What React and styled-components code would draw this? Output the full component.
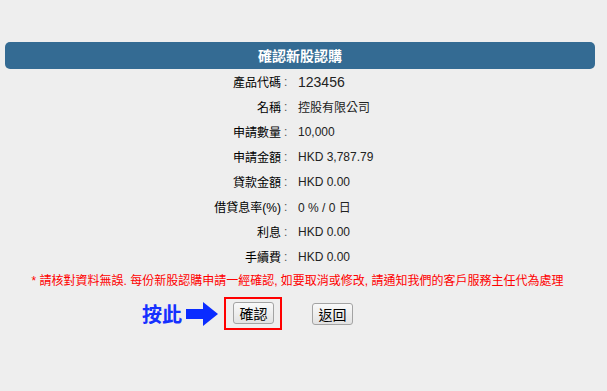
import React from "react";
import styled, { createGlobalStyle } from "styled-components";

const Global = createGlobalStyle`
  html, body { margin: 0; padding: 0; background: #eeeeee; }
  body {
    font-family: "Liberation Sans", Arial, "Noto Sans CJK TC", sans-serif;
    font-size: 12px;
    color: #000;
  }
`;

const Page = styled.div`
  width: 590px;
  padding: 42px 12px 0 5px;
`;

const TitleBar = styled.div`
  height: 27px;
  line-height: 27px;
  background: #346b93;
  border-radius: 5px;
  color: #fff;
  font-weight: bold;
  font-size: 14px;
  text-align: center;
  font-family: "Noto Sans CJK TC", sans-serif;
`;

const InfoGrid = styled.div`
  display: grid;
  grid-template-columns: 276px 17px 1fr;
  grid-auto-rows: 25px;
  align-items: center;
`;

const Label = styled.div`
  text-align: right;
  font-size: 12px;
  color: #000;
`;

const Colon = styled.div`
  padding-left: 3px;
  color: #555;
  font-size: 12px;
`;

const Value = styled.div`
  font-size: ${(p) => (p.$large ? "14px" : "12px")};
  color: #222;
`;

const Note = styled.div`
  height: 25px;
  line-height: 25px;
  text-align: center;
  color: #ff0000;
  font-size: 12px;
  padding-right: 5px;
`;

const ActionRow = styled.div`
  display: flex;
  align-items: center;
  margin-top: 3px;
  padding-left: 137px;
`;

const Hint = styled.span`
  font-family: "Noto Sans CJK TC", sans-serif;
  font-size: 20px;
  font-weight: bold;
  color: #1530ff;
  line-height: 24px;
`;

const Arrow = styled.svg`
  margin-left: 4px;
  margin-right: 6px;
  display: block;
`;

const Highlight = styled.div`
  border: 2px solid #ff0000;
  padding: 3px 6px 4px 7px;
  display: flex;
`;

const Button = styled.button`
  width: 41px;
  height: 22px;
  padding: 0;
  margin: 0;
  font-family: "Noto Sans CJK TC", sans-serif;
  font-size: 14px;
  line-height: 20px;
  color: #000;
  border: 1px solid #a3a3a3;
  border-radius: 3px;
  background: linear-gradient(#f9f9f9, #e2e2e2);
  margin-left: ${(p) => p.$ml || "0"};
`;

const rows = [
  ["產品代碼", "123456", true],
  ["名稱", "控股有限公司"],
  ["申請數量", "10,000"],
  ["申請金額", "HKD 3,787.79"],
  ["貸款金額", "HKD 0.00"],
  ["借貸息率(%)", "0 % / 0 日"],
  ["利息", "HKD 0.00"],
  ["手續費", "HKD 0.00"],
];

export default function App() {
  return (
    <>
      <Global />
      <Page>
        <TitleBar>確認新股認購</TitleBar>
        <InfoGrid>
          {rows.map(([l, v, big]) => (
            <React.Fragment key={l}>
              <Label>{l}</Label>
              <Colon>:</Colon>
              <Value $large={big}>{v}</Value>
            </React.Fragment>
          ))}
        </InfoGrid>
        <Note>
          * 請核對資料無誤. 每份新股認購申請一經確認, 如要取消或修改, 請通知我們的客戶服務主任代為處理
        </Note>
        <ActionRow>
          <Hint>按此</Hint>
          <Arrow width="32" height="24" viewBox="0 0 32 24">
            <rect x="0" y="7" width="19" height="10" fill="#0a2cff" />
            <polygon points="17,0 32,12 17,24" fill="#0a2cff" />
          </Arrow>
          <Highlight>
            <Button>確認</Button>
          </Highlight>
          <Button $ml="30px">返回</Button>
        </ActionRow>
      </Page>
    </>
  );
}
